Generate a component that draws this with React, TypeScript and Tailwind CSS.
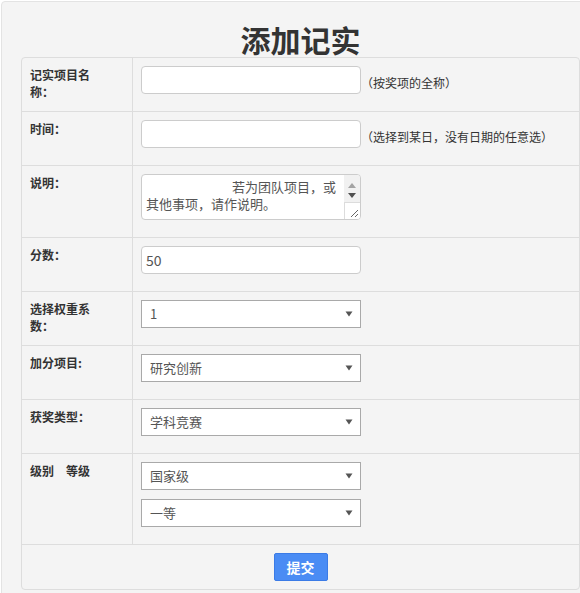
import React from "react";

const font = { fontFamily: '"Noto Sans CJK SC", "Noto Sans", sans-serif' };

function Arrow() {
  return (
    <svg width="8" height="6" viewBox="0 0 8 6" className="absolute right-[7px] top-1/2 -translate-y-1/2">
      <path d="M0.5 0.5 L7.5 0.5 L4 5.5 Z" fill="#555" />
    </svg>
  );
}

function Select({ value }: { value: string }) {
  return (
    <div className="relative w-[220px] h-[28px] border border-[#a9a9a9] bg-white mb-[9px] flex items-center pl-2 text-[13px] text-[#555]">
      {value}
      <Arrow />
    </div>
  );
}

function Row({ label, children }: { label: React.ReactNode; children: React.ReactNode }) {
  return (
    <div className="flex border-b border-[#dddddd]">
      <div className="w-[111px] shrink-0 border-r border-[#dddddd] p-2">
        <div className="w-[72px] text-[12px] leading-[17px] font-bold text-[#333]">{label}</div>
      </div>
      <div className="flex-1 px-2 pt-2 pb-2">{children}</div>
    </div>
  );
}

function TextInput({ value, hint }: { value?: string; hint?: string }) {
  return (
    <div className="flex items-center mb-[9px]">
      <div className="w-[220px] h-[28px] border border-[#cccccc] rounded-[4px] bg-white flex items-center pl-[4px] text-[14px] text-[#555]">
        {value}
      </div>
      {hint && <span className="pt-[6px] text-[12px] text-[#333] whitespace-nowrap">{hint}</span>}
    </div>
  );
}

export default function App() {
  return (
    <div className="w-[580px] h-[593px] overflow-hidden bg-white pt-[1px] pl-[1px]" style={font}>
      <div className="w-[620px] border border-[#e3e3e3] rounded-[4px] bg-[#f4f4f4] px-[19px] pb-5">
        <div className="w-[559px] h-[55px] pt-[19px] text-center text-[30px] leading-[36px] font-bold text-[#333]">
          添加记实
        </div>
        <div className="w-[559px] border border-[#dddddd] rounded-[4px]">
          <Row label="记实项目名称：">
            <TextInput hint="（按奖项的全称）" />
          </Row>
          <Row label="时间：">
            <TextInput hint="（选择到某日，没有日期的任意选）" />
          </Row>
          <Row label="说明：">
            <div className="w-[220px] h-[46px] border border-[#cccccc] rounded-[4px] bg-white flex overflow-hidden mb-[9px]">
              <div className="flex-1 pl-[4px] pt-[3px] text-[13px] leading-[17px] text-[#555] indent-[86px]">
                若为团队项目，或其他事项，请作说明。
              </div>
              <div className="w-[16px] flex flex-col bg-[#f1f1f1]">
                <div className="h-[13px] flex items-end justify-center">
                  <svg width="8" height="5" viewBox="0 0 8 5"><path d="M0 5 L8 5 L4 0 Z" fill="#a3a3a3" /></svg>
                </div>
                <div className="h-[14px] flex items-center justify-center">
                  <svg width="8" height="5" viewBox="0 0 8 5"><path d="M0 0 L8 0 L4 5 Z" fill="#505050" /></svg>
                </div>
                <div className="flex-1 bg-white border-t border-l border-[#dcdcdc] relative">
                  <svg width="10" height="10" viewBox="0 0 10 10" className="absolute right-[1px] bottom-[1px]">
                    <path d="M9 2 L2 9 M9 6 L6 9" stroke="#666" strokeWidth="1" />
                  </svg>
                </div>
              </div>
            </div>
          </Row>
          <Row label="分数：">
            <TextInput value="50" />
          </Row>
          <Row label="选择权重系数：">
            <Select value="1" />
          </Row>
          <Row label="加分项目:">
            <Select value="研究创新" />
          </Row>
          <Row label="获奖类型：">
            <Select value="学科竞赛" />
          </Row>
          <Row label="级别　等级">
            <Select value="国家级" />
            <Select value="一等" />
          </Row>
          <div className="flex justify-center pt-2 pb-2">
            <button className="w-[54px] h-[28px] bg-[#4a8cf4] border border-[#3b7be6] rounded-[2px] text-white text-[14px] font-bold leading-none" style={font}>
              提交
            </button>
          </div>
        </div>
      </div>
    </div>
  );
}
